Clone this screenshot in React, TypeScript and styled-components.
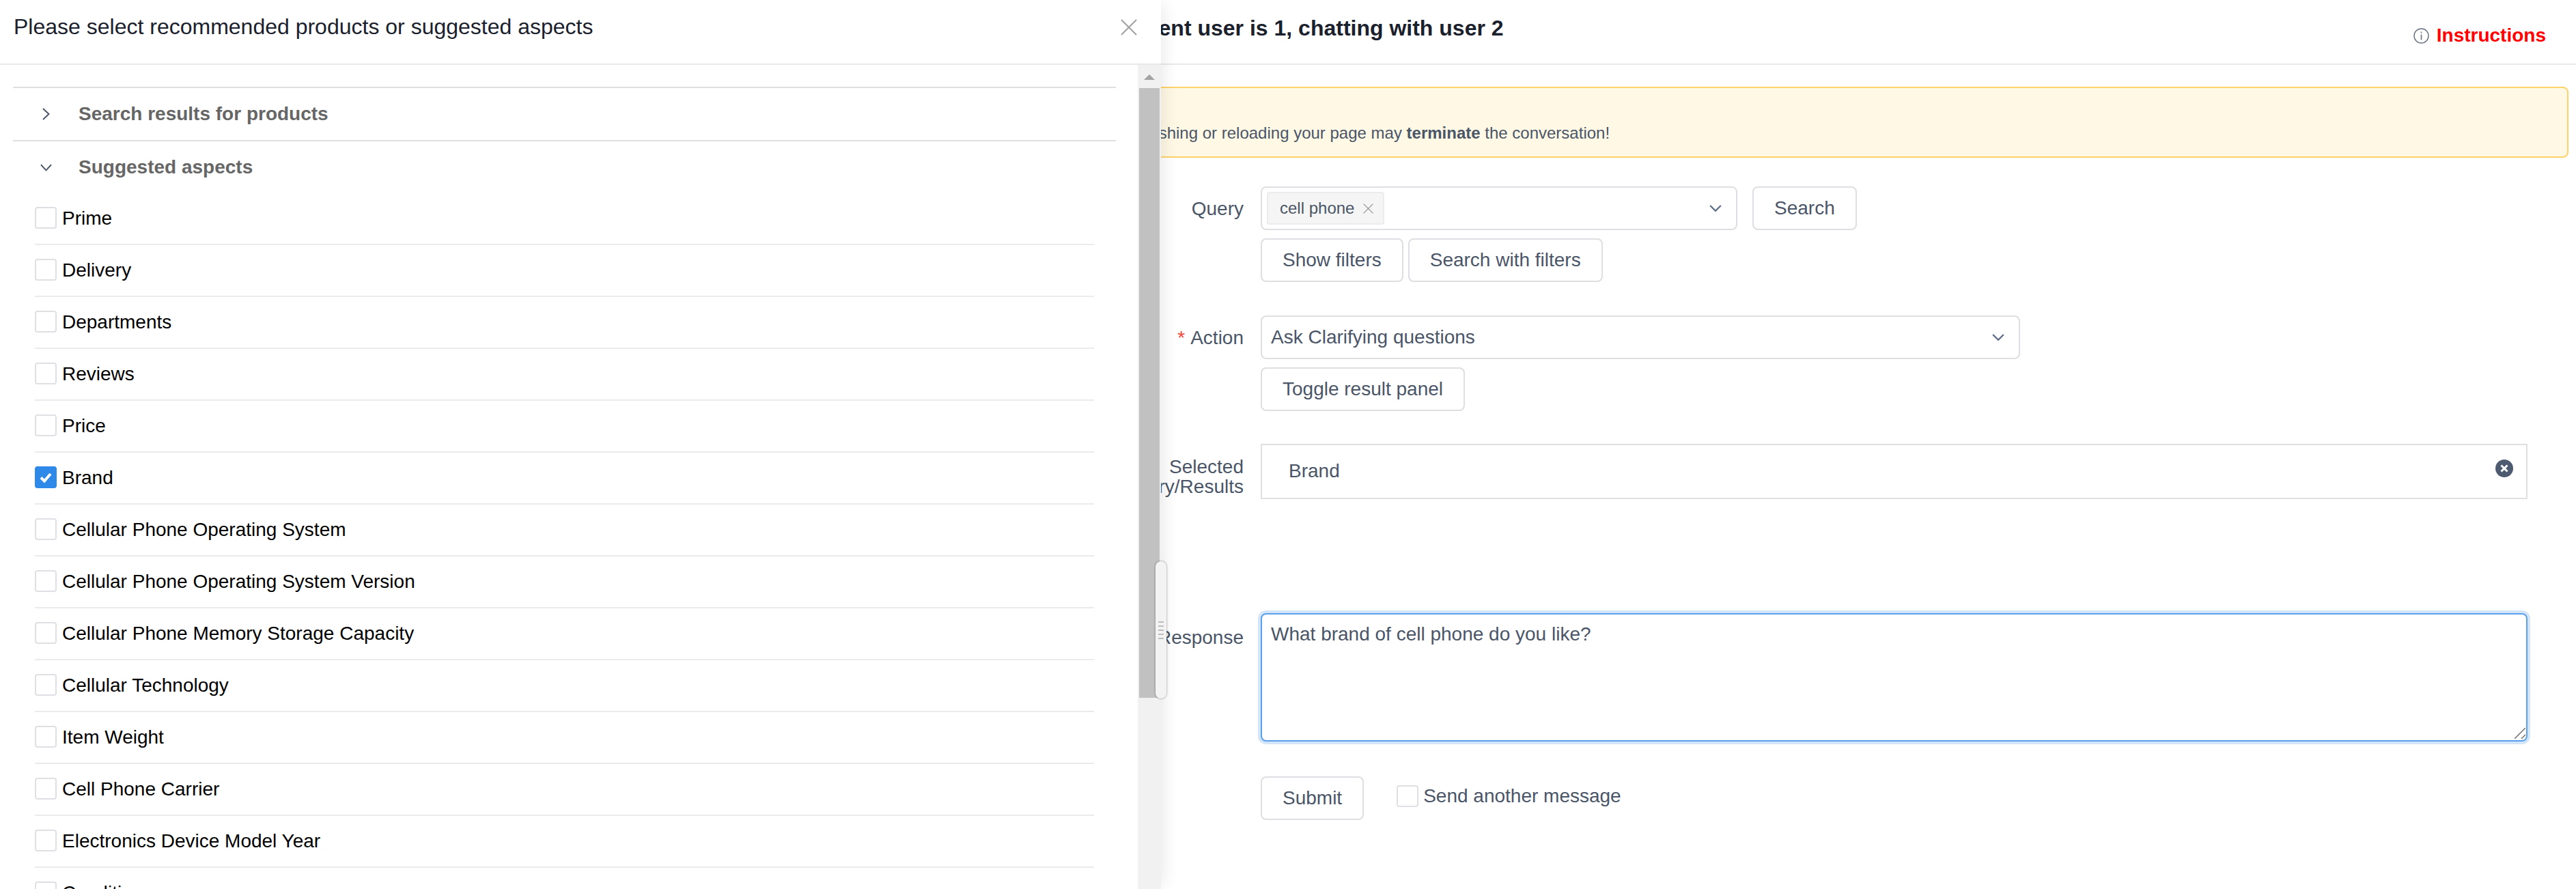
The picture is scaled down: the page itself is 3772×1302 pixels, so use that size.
import { createGlobalStyle, styled } from 'styled-components';

const aspects = [
  'Prime',
  'Delivery',
  'Departments',
  'Reviews',
  'Price',
  'Brand',
  'Cellular Phone Operating System',
  'Cellular Phone Operating System Version',
  'Cellular Phone Memory Storage Capacity',
  'Cellular Technology',
  'Item Weight',
  'Cell Phone Carrier',
  'Electronics Device Model Year',
  'Condition',
];

const GlobalStyle = createGlobalStyle`
  html, body {
    margin: 0;
    height: 100%;
    overflow: hidden;
    background: #fff;
  }
  body, button, textarea {
    font-family: "Liberation Sans", Arial, sans-serif;
  }
  * {
    box-sizing: border-box;
  }
`;

const Page = styled.div`
  position: relative;
  height: 100vh;
  overflow: hidden;
`;

/* drawer on the left, lies over the chat form */
const Drawer = styled.aside`
  position: absolute;
  top: 0;
  left: 0;
  bottom: 0;
  z-index: 2;
  width: 1700px;
  display: flex;
  flex-direction: column;
  background: #fff;
  box-shadow: 8px 0 24px -6px rgba(0, 0, 0, 0.1);
`;

const DrawerHeader = styled.header`
  flex: none;
  height: 95px;
  padding: 0 35px 14px 20px;
  display: flex;
  align-items: center;
  justify-content: space-between;
  border-bottom: 2px solid #e9e9e9;
`;

const DrawerTitle = styled.h2`
  margin: 0;
  font-size: 32px;
  font-weight: 400;
  color: #1a202c;
`;

const DrawerBody = styled.div`
  flex: 1;
  min-height: 0;
  display: flex;
`;

const List = styled.div`
  flex: 1;
  overflow: hidden;
  padding: 32px 32px 0 19px;
`;

const SectionHeader = styled.div`
  height: 78px;
  padding-left: 40px;
  display: flex;
  align-items: center;
  gap: 39px;
  border-top: 2px solid #dedee3;
  font-size: 28px;
  font-weight: 700;
  color: #666;
`;

const Chevron = styled.span`
  width: 17px;
  display: flex;
  justify-content: center;
  color: #4a5568;
`;

const Rows = styled.div`
  margin: 0 32px;
`;

const Row = styled.label`
  height: 76px;
  padding-bottom: 3px;
  display: flex;
  align-items: center;
  gap: 8px;
  border-bottom: 2px solid #ebebeb;
  font-size: 28px;
  color: #000;
`;

const RowText = styled.span`
  padding-top: 2px;
`;

const Box = styled.span<{ $checked?: boolean }>`
  flex: none;
  width: 32px;
  height: 32px;
  display: flex;
  align-items: center;
  justify-content: center;
  border: 2px solid ${(p) => (p.$checked ? '#2e89e8' : '#e0e0e4')};
  border-radius: 4px;
  background: ${(p) => (p.$checked ? '#2e89e8' : '#fff')};
`;

const Scrollbar = styled.div`
  flex: none;
  width: 34px;
  background: #f1f1f1;
`;

const ScrollArrow = styled.div`
  height: 34px;
  display: flex;
  justify-content: center;
  padding-top: 14px;
`;

const ScrollThumb = styled.div`
  height: 893px;
  margin: 0 2px;
  background: #c1c1c1;
`;

const Handle = styled.div`
  position: absolute;
  top: 822px;
  right: -8px;
  width: 16px;
  height: 201px;
  display: flex;
  flex-direction: column;
  align-items: center;
  justify-content: center;
  gap: 4px;
  background: #f3f3f3;
  border-radius: 8px;
  box-shadow: 0 0 3px rgba(0, 0, 0, 0.45);
`;

const Grip = styled.span`
  width: 8px;
  height: 2px;
  background: #bdbdbd;
`;

const Main = styled.main`
  padding-left: 1610px;
`;

const TopBar = styled.header`
  height: 95px;
  display: flex;
  justify-content: space-between;
  align-items: flex-start;
  padding: 0 44px 0 1629px;
  margin-left: -1610px;
  border-bottom: 2px solid #e9e9e9;
`;

const Heading = styled.h1`
  margin: 23px 0 0;
  font-size: 32px;
  line-height: 36px;
  font-weight: 700;
  color: #1a202c;
`;

const Instructions = styled.div`
  margin-top: 36px;
  display: flex;
  align-items: center;
  gap: 11px;
  font-size: 28px;
  line-height: 32px;
  font-weight: 700;
  color: #f00;
`;

const Alert = styled.div`
  height: 104px;
  margin: 32px 11px 42px 0;
  padding: 0 0 18px 26px;
  display: flex;
  align-items: flex-end;
  background: #fff8e5;
  border: 2px solid #ffd369;
  border-radius: 8px;
  font-size: 24px;
  line-height: 32px;
  color: #4a5568;

  b {
    font-weight: 700;
  }
`;

const Form = styled.form`
  padding-right: 71px;
`;

const FormRow = styled.div<{ $gap: number }>`
  display: grid;
  grid-template-columns: 211px 1fr;
  column-gap: 25px;
  margin-bottom: ${(p) => p.$gap}px;
`;

const Label = styled.div<{ $top?: number }>`
  align-self: start;
  min-height: 64px;
  padding-top: ${(p) => p.$top ?? 0}px;
  display: flex;
  align-items: center;
  justify-content: flex-end;
  text-align: right;
  font-size: 28px;
  line-height: 29px;
  color: #4a5568;
`;

const Clipped = styled.span`
  white-space: nowrap;
`;

const Required = styled.span`
  margin-right: 8px;
  color: #f5483b;
`;

const Controls = styled.div`
  display: flex;
  flex-direction: column;
  align-items: flex-start;
  gap: 12px;
`;

const Inline = styled.div<{ $gap: number }>`
  display: flex;
  align-items: center;
  gap: ${(p) => p.$gap}px;
`;

const Select = styled.div<{ $width: number }>`
  width: ${(p) => p.$width}px;
  height: 64px;
  padding: 0 21px 0 13px;
  display: flex;
  align-items: center;
  justify-content: space-between;
  border: 2px solid #dedee3;
  border-radius: 8px;
  font-size: 28px;
  color: #4a5568;
`;

const Tag = styled.span`
  margin-left: -6px;
  height: 48px;
  padding: 0 14px 0 17px;
  display: flex;
  align-items: center;
  gap: 13px;
  background: #f5f5f5;
  border: 2px solid #ececec;
  border-radius: 4px;
  font-size: 24px;
`;

const Button = styled.button`
  height: 64px;
  padding: 0 30px;
  background: #fff;
  border: 2px solid #dedee3;
  border-radius: 8px;
  font-size: 28px;
  color: #4a5568;
`;

const SelectedBox = styled.div`
  height: 81px;
  padding: 0 19px 0 39px;
  display: flex;
  align-items: flex-start;
  justify-content: space-between;
  border: 2px solid #e0e0e0;
  font-size: 28px;
  line-height: 76px;
  color: #4a5568;

  svg {
    margin-top: 21px;
  }
`;

const ResponseWrap = styled.div`
  position: relative;
`;

const Response = styled.textarea`
  display: block;
  width: 100%;
  height: 188px;
  padding: 12px 13px;
  border: 2px solid #5ba0ea;
  border-radius: 8px;
  outline: none;
  resize: none;
  box-shadow: 0 0 0 4px #d3e5f9;
  font-size: 28px;
  line-height: 34px;
  color: #4a5568;
`;

/* corner grip of the textarea */
const ResizeGrip = styled.svg`
  position: absolute;
  right: 3px;
  bottom: 4px;
`;

const Check = styled.label`
  margin-bottom: 6px;
  display: flex;
  align-items: center;
  gap: 7px;
  font-size: 28px;
  color: #4a5568;
`;

const CheckMark = () => (
  <svg width="20" height="18" viewBox="0 0 20 18">
    <path d="M3 9.5 L8 14.5 L17 4" fill="none" stroke="#fff" strokeWidth="4" />
  </svg>
);

const DownIcon = ({ size = 18 }: { size?: number }) => (
  <svg width={size} height={size * 0.6} viewBox="0 0 18 11">
    <path d="M1 1 L9 9 L17 1" fill="none" stroke="#5f6f88" strokeWidth="2.4" />
  </svg>
);

const CloseIcon = ({ size, color, weight }: { size: number; color: string; weight: number }) => (
  <svg width={size} height={size} viewBox="0 0 24 24">
    <path d="M1 1 L23 23 M23 1 L1 23" fill="none" stroke={color} strokeWidth={weight} />
  </svg>
);

export default function App() {
  return (
    <Page>
      <GlobalStyle />
      <Main>
        <TopBar>
          <Heading>Current user is 1, chatting with user 2</Heading>
          <Instructions>
            <svg width="23" height="23" viewBox="0 0 23 23">
              <circle cx="11.5" cy="11.5" r="10.5" fill="none" stroke="#66707f" strokeWidth="1.4" />
              <path d="M11.5 9.5 V17.5 M11.5 5.5 V7.5" stroke="#66707f" strokeWidth="1.6" />
            </svg>
            Instructions
          </Instructions>
        </TopBar>
        <Alert>
          <span>
            Refreshing or reloading your page may <b>terminate</b> the conversation!
          </span>
        </Alert>
        <Form>
          <FormRow $gap={49}>
            <Label>Query</Label>
            <Controls>
              <Inline $gap={22}>
                <Select $width={698}>
                  <Tag>
                    cell phone
                    <CloseIcon size={15} color="#8c8c8c" weight={1.8} />
                  </Tag>
                  <DownIcon />
                </Select>
                <Button>Search</Button>
              </Inline>
              <Inline $gap={7}>
                <Button>Show filters</Button>
                <Button>Search with filters</Button>
              </Inline>
            </Controls>
          </FormRow>
          <FormRow $gap={48}>
            <Label>
              <Required>*</Required>Action
            </Label>
            <Controls>
              <Select $width={1112}>
                Ask Clarifying questions
                <DownIcon />
              </Select>
              <Button>Toggle result panel</Button>
            </Controls>
          </FormRow>
          <FormRow $gap={167}>
            <Label $top={19}>
              <Clipped>
                Selected
                <br />
                Query/Results
              </Clipped>
            </Label>
            <SelectedBox>
              Brand
              <svg width="26" height="26" viewBox="0 0 26 26">
                <circle cx="13" cy="13" r="13" fill="#4e5a70" />
                <path d="M8.5 8.5 L17.5 17.5 M17.5 8.5 L8.5 17.5" stroke="#fff" strokeWidth="3" />
              </svg>
            </SelectedBox>
          </FormRow>
          <FormRow $gap={51}>
            <Label $top={6}>Response</Label>
            <ResponseWrap>
              <Response defaultValue="What brand of cell phone do you like?" />
              <ResizeGrip width="16" height="16" viewBox="0 0 16 16">
                <path d="M0 16 L16 0 M10 16 L16 10" stroke="#666" strokeWidth="1.4" />
              </ResizeGrip>
            </ResponseWrap>
          </FormRow>
          <FormRow $gap={0}>
            <span />
            <Inline $gap={48}>
              <Button>Submit</Button>
              <Check>
                <Box />
                Send another message
              </Check>
            </Inline>
          </FormRow>
        </Form>
      </Main>
      <Drawer>
        <DrawerHeader>
          <DrawerTitle>Please select recommended products or suggested aspects</DrawerTitle>
          <CloseIcon size={24} color="#a3a3a3" weight={2.2} />
        </DrawerHeader>
        <DrawerBody>
          <List>
            <SectionHeader>
              <Chevron>
                <svg width="11" height="18" viewBox="0 0 11 18">
                  <path d="M1 1 L9.5 9 L1 17" fill="none" stroke="#4a5568" strokeWidth="2" />
                </svg>
              </Chevron>
              Search results for products
            </SectionHeader>
            <SectionHeader>
              <Chevron>
                <svg width="18" height="11" viewBox="0 0 18 11">
                  <path d="M1 1 L9 9.5 L17 1" fill="none" stroke="#4a5568" strokeWidth="2" />
                </svg>
              </Chevron>
              Suggested aspects
            </SectionHeader>
            <Rows>
              {aspects.map((name) => (
                <Row key={name}>
                  <Box $checked={name === 'Brand'}>{name === 'Brand' && <CheckMark />}</Box>
                  <RowText>{name}</RowText>
                </Row>
              ))}
            </Rows>
          </List>
          <Scrollbar>
            <ScrollArrow>
              <svg width="16" height="8" viewBox="0 0 16 8">
                <path d="M8 0 L16 8 H0 Z" fill="#a3a3a3" />
              </svg>
            </ScrollArrow>
            <ScrollThumb />
          </Scrollbar>
        </DrawerBody>
        <Handle>
          {[0, 1, 2, 3, 4].map((i) => (
            <Grip key={i} />
          ))}
        </Handle>
      </Drawer>
    </Page>
  );
}
